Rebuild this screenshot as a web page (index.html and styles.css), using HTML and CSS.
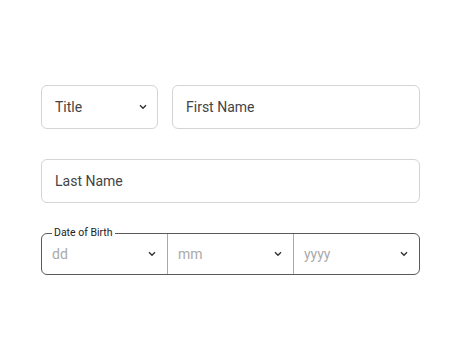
FILE: index.html
```html
<!DOCTYPE html>
<html>
<head>
<meta charset="utf-8">
<link rel="stylesheet" href="styles.css">
</head>
<body>
<div class="form">
  <div class="row">
    <div class="field select title">
      <span class="value">Title</span>
      <svg class="chev" width="10" height="6" viewBox="0 0 10 6"><path d="M2 1.3 L5 4.3 L8 1.3" fill="none" stroke="#333" stroke-width="1.4"/></svg>
    </div>
    <div class="field grow"><span class="value">First Name</span></div>
  </div>
  <div class="row">
    <div class="field grow"><span class="value">Last Name</span></div>
  </div>
  <div class="dob">
    <span class="dob-label">Date of Birth</span>
    <div class="cell">
      <span class="ph">dd</span>
      <svg class="chev" width="10" height="6" viewBox="0 0 10 6"><path d="M2 1.3 L5 4.3 L8 1.3" fill="none" stroke="#333" stroke-width="1.4"/></svg>
    </div>
    <div class="cell">
      <span class="ph">mm</span>
      <svg class="chev" width="10" height="6" viewBox="0 0 10 6"><path d="M2 1.3 L5 4.3 L8 1.3" fill="none" stroke="#333" stroke-width="1.4"/></svg>
    </div>
    <div class="cell">
      <span class="ph">yyyy</span>
      <svg class="chev" width="10" height="6" viewBox="0 0 10 6"><path d="M2 1.3 L5 4.3 L8 1.3" fill="none" stroke="#333" stroke-width="1.4"/></svg>
    </div>
  </div>
</div>
</body>
</html>
```
FILE: styles.css
```css
html, body {
  margin: 0;
  background: #fff;
}
body {
  font-family: Roboto, "Liberation Sans", sans-serif;
  width: 460px;
  height: 360px;
}
.form {
  padding: 85px 0 0 41px;
  width: 379px;
  display: flex;
  flex-direction: column;
  gap: 30px;
}
.row {
  display: flex;
  gap: 14px;
}
.field {
  box-sizing: border-box;
  height: 44px;
  border: 1px solid #d4d4d4;
  border-radius: 6px;
  display: flex;
  align-items: center;
  padding: 0 13px;
  font-size: 14px;
  color: #444;
}
.title {
  width: 117px;
  justify-content: space-between;
  padding-right: 9px;
}
.grow {
  flex: 1;
}
.dob {
  position: relative;
  box-sizing: border-box;
  height: 42px;
  border: 1px solid #5a5a5a;
  border-radius: 6px;
  display: flex;
}
.dob-label {
  position: absolute;
  top: -8px;
  left: 10px;
  padding: 0 2px;
  background: #fff;
  font-size: 10.5px;
  line-height: 13px;
  color: #222;
}
.cell {
  flex: 1;
  display: flex;
  align-items: center;
  justify-content: space-between;
  padding: 0 10px 0 10px;
  font-size: 14px;
}
.cell + .cell {
  border-left: 1px solid #a8a8a8;
}
.ph {
  color: #aaa;
}
.chev {
  display: block;
}
```
